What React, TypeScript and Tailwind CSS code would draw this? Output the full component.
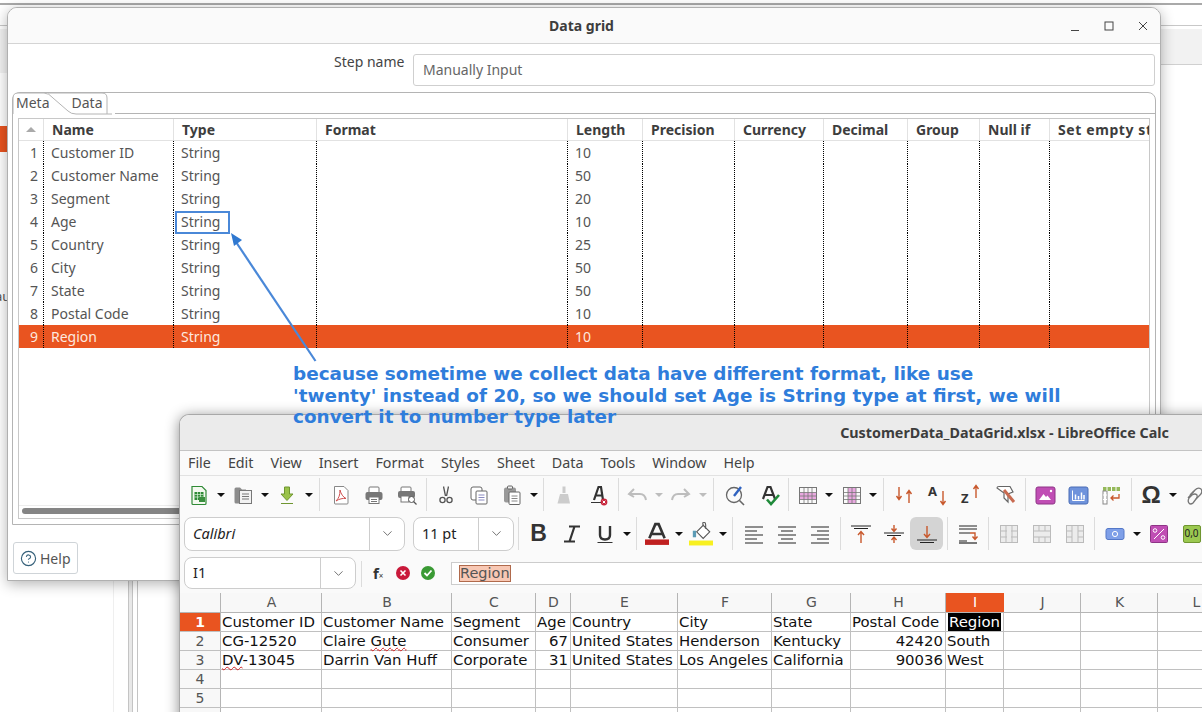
import type { ReactNode } from "react";
import { CircleHelp, ChevronDown } from "lucide-react";

const gridCols = [
  { title: "Name", w: 130 },
  { title: "Type", w: 143 },
  { title: "Format", w: 251 },
  { title: "Length", w: 75 },
  { title: "Precision", w: 92 },
  { title: "Currency", w: 89 },
  { title: "Decimal", w: 84 },
  { title: "Group", w: 72 },
  { title: "Null if", w: 70 },
  { title: "Set empty string?", w: 100 },
];

const gridRows = [
  ["Customer ID", "String", "10"],
  ["Customer Name", "String", "50"],
  ["Segment", "String", "20"],
  ["Age", "String", "10"],
  ["Country", "String", "25"],
  ["City", "String", "50"],
  ["State", "String", "50"],
  ["Postal Code", "String", "10"],
  ["Region", "String", "10"],
];

const sheetCols = [
  { l: "A", w: 101 },
  { l: "B", w: 130 },
  { l: "C", w: 84 },
  { l: "D", w: 35 },
  { l: "E", w: 107 },
  { l: "F", w: 94 },
  { l: "G", w: 79 },
  { l: "H", w: 95 },
  { l: "I", w: 58 },
  { l: "J", w: 77 },
  { l: "K", w: 77 },
  { l: "L", w: 77 },
];

const sheetRows: ReactNode[][] = [
  ["Customer ID", "Customer Name", "Segment", "Age", "Country", "City", "State", "Postal Code", "Region"],
  ["CG-12520", <>Claire <span className="underline decoration-wavy decoration-[#d02020] decoration-1">Gute</span></>, "Consumer", "67", "United States", "Henderson", "Kentucky", "42420", "South"],
  [<><span className="underline decoration-wavy decoration-[#d02020] decoration-1">DV</span>-13045</>, "Darrin Van Huff", "Corporate", "31", "United States", "Los Angeles", "California", "90036", "West"],
  [],
  [],
  [],
];

const Ico = ({ children, w = 22, h = 22 }: { children: ReactNode; w?: number; h?: number }) => (
  <svg width={w} height={h} viewBox="0 0 22 22" fill="none">
    {children}
  </svg>
);

const Btn = ({ children, active }: { children: ReactNode; active?: boolean }) => (
  <div className={`flex h-[33px] w-[33px] shrink-0 items-center justify-center rounded-[6px] ${active ? "bg-[#d4d4d4]" : ""}`}>
    {children}
  </div>
);

const Drop = () => (
  <div className="flex w-[11px] shrink-0 justify-center">
    <div className="h-0 w-0 border-x-[4px] border-t-[4px] border-x-transparent border-t-[#111]" />
  </div>
);

const Drop2 = () => (
  <div className="flex w-[11px] shrink-0 justify-center">
    <div className="h-0 w-0 border-x-[4px] border-t-[4px] border-x-transparent border-t-[#bdbdbd]" />
  </div>
);

const Sep = ({ w = 8 }: { w?: number }) => (
  <div className="flex h-[33px] shrink-0 justify-center" style={{ width: w }}>
    <div className="h-full w-px bg-[#dcdcdc]" />
  </div>
);

const Gap = () => <div className="w-[2px] shrink-0" />;

const SmallGrid = ({ fill }: { fill: ReactNode }) => (
  <Ico>
    {fill}
    <rect x="3.5" y="3.5" width="17" height="16" stroke="#777" />
    <path d="M3.5 8.5H20.5M3.5 12H20.5M3.5 15.5H20.5M8 3.5V19.5M12 3.5V19.5M16 3.5V19.5" stroke="#777" strokeWidth="0.8" />
  </Ico>
);

const Lines = ({ d }: { d: string }) => (
  <Ico>
    <path d={d} stroke="#222" strokeWidth="1.2" />
  </Ico>
);

const Arrow = ({ d }: { d: string }) => <path d={d} stroke="#c8582c" strokeWidth="1.4" fill="none" />;

const Toolbar1 = () => (
  <div className="flex h-[37px] shrink-0 items-center bg-[#fafafa] pl-[2.5px]">
    <Btn>
      <Ico>
        <path d="M4 2.5H14L18 6.5V19.5Q18 20.5 17 20.5H5Q4 20.5 4 19.5Z" fill="#f4f9f0" stroke="#2f8a36" strokeWidth="1.2" />
        <rect x="6.5" y="8" width="9" height="8" fill="#2f8a36" />
        <path d="M6.5 10.5H15.5M6.5 13H15.5M9.5 8V16M12.5 8V16" stroke="#d8f0d8" strokeWidth="0.7" />
        <rect x="11" y="13" width="6" height="5" fill="#3a8f3e" />
      </Ico>
    </Btn>
    <Drop />
    <Btn>
      <Ico>
        <path d="M2.5 5Q2.5 3.5 4 3.5H8L10 5.5H14V19.5H4Q2.5 19.5 2.5 18Z" fill="#8c8c8c" />
        <rect x="7.5" y="6.5" width="12" height="13" fill="#f2f2f2" stroke="#777" />
        <path d="M10 10H17M10 12.5H17M10 15H17" stroke="#777" />
      </Ico>
    </Btn>
    <Drop />
    <Btn>
      <Ico>
        <path d="M8.5 3H13.5V10H17L11 16.5L5 10H8.5Z" fill="#9ac34a" stroke="#6f9630" />
        <path d="M5 19.5H17" stroke="#6f9630" strokeWidth="1.2" />
      </Ico>
    </Btn>
    <Drop />
    <Sep w={10} />
    <Btn>
      <Ico>
        <path d="M4.5 2.5H14L18 6.5V19Q18 20 17 20H5Q4.5 20 4.5 19Z" fill="#fff" stroke="#888" />
        <path d="M10 6C10 11 9 14 6 17C9 15 13 14 16 14.5C13 13 11 10 10 6Z" stroke="#d05050" strokeWidth="1" fill="none" />
      </Ico>
    </Btn>
    <Btn>
      <Ico>
        <rect x="6" y="3" width="10" height="6" rx="1" stroke="#777" fill="#fff" />
        <rect x="2.5" y="8" width="17" height="8" rx="2" fill="#777" />
        <rect x="6" y="13" width="10" height="6.5" fill="#fff" stroke="#777" />
        <path d="M8 15.5H14M8 17.5H14" stroke="#777" />
      </Ico>
    </Btn>
    <Btn>
      <Ico>
        <rect x="5" y="3" width="10" height="5" rx="1" stroke="#777" fill="#fff" />
        <rect x="2" y="7" width="17" height="7" rx="2" fill="#777" />
        <rect x="5" y="12" width="8" height="6" fill="#fff" stroke="#777" />
        <circle cx="15.5" cy="15.5" r="3" fill="#fff" stroke="#555" />
        <path d="M17.5 17.5L20.5 20.5" stroke="#555" strokeWidth="1.2" />
      </Ico>
    </Btn>
    <Sep w={6} />
    <Btn>
      <Ico>
        <path d="M8.5 2.5L10.5 12M13.5 2.5L11.5 12" stroke="#555" strokeWidth="1.3" />
        <circle cx="7.5" cy="16" r="2.6" stroke="#555" strokeWidth="1.3" />
        <circle cx="14.5" cy="16" r="2.6" stroke="#555" strokeWidth="1.3" />
      </Ico>
    </Btn>
    <Btn>
      <Ico>
        <rect x="3" y="3" width="11" height="13" rx="2" fill="#fff" stroke="#666" />
        <rect x="8" y="7" width="11" height="13" rx="1" fill="#fff" stroke="#666" />
        <path d="M10.5 11H16.5M10.5 13.5H16.5M10.5 16H16.5" stroke="#8a8ac0" />
      </Ico>
    </Btn>
    <Btn>
      <Ico>
        <rect x="3" y="3.5" width="12" height="15" rx="2" fill="#999" />
        <rect x="6.5" y="2" width="5" height="3" rx="1" fill="#eee" stroke="#666" />
        <rect x="8" y="8" width="11" height="12.5" rx="1" fill="#fff" stroke="#666" />
        <path d="M10.5 12H16.5M10.5 14.5H16.5M10.5 17H16.5" stroke="#888" />
      </Ico>
    </Btn>
    <Drop />
    <Sep w={8} />
    <Btn>
      <Ico>
        <path d="M9.5 2.5H12.5V9H9.5Z" fill="#ccc" />
        <path d="M7 10H15L17 19.5H4.5Z" fill="#ccc" />
      </Ico>
    </Btn>
    <Gap />
    <Btn>
      <Ico>
        <path d="M6 16L10.5 3H13L15 16M7.5 11.5H14" stroke="#333" strokeWidth="2.2" />
        <path d="M3 18.5H13" stroke="#333" strokeWidth="1" />
        <circle cx="16" cy="18" r="3.4" fill="#c8263c" />
        <path d="M14.7 16.7L17.3 19.3M17.3 16.7L14.7 19.3" stroke="#fff" />
      </Ico>
    </Btn>
    <Sep w={5} />
    <Btn>
      <Ico>
        <path d="M8 5L3 10L8 13M3.5 10H14Q19 10 20 16" stroke="#bdbdbd" strokeWidth="2" />
      </Ico>
    </Btn>
    <Drop2 />
    <Btn>
      <Ico>
        <path d="M14 5L19 10L14 13M18.5 10H8Q3 10 2 16" stroke="#bdbdbd" strokeWidth="2" />
      </Ico>
    </Btn>
    <Drop2 />
    <Sep w={10} />
    <Btn>
      <Ico>
        <circle cx="10" cy="11" r="7.5" stroke="#666" strokeWidth="1.3" />
        <path d="M15.5 16.5L20 21" stroke="#666" strokeWidth="1.6" />
        <path d="M10 12L17 3" stroke="#2f62c0" strokeWidth="2.4" />
      </Ico>
    </Btn>
    <Gap />
    <Btn>
      <Ico>
        <path d="M4 15L8.5 3H11.5L16 15M6 11H14" stroke="#333" strokeWidth="2.2" />
        <path d="M8 15.5L12 20L20 11" stroke="#1f8a3a" strokeWidth="2.6" />
      </Ico>
    </Btn>
    <Sep w={4} />
    <Btn>
      <SmallGrid fill={<rect x="3.5" y="8.5" width="17" height="7" fill="#e9a8e0" />} />
    </Btn>
    <Drop />
    <Btn>
      <SmallGrid fill={<rect x="8" y="3.5" width="8" height="16" fill="#e9a8e0" />} />
    </Btn>
    <Drop />
    <Sep w={10} />
    <Btn>
      <Ico>
        <Arrow d="M5 3V15M2.5 12L5 15.5L7.5 12" />
        <Arrow d="M15 19V7M12.5 10L15 6.5L17.5 10" />
      </Ico>
    </Btn>
    <Btn>
      <Ico>
        <text x="1" y="12" fontFamily="'Noto Sans', sans-serif" fontSize="13" fontWeight="700" fill="#333">A</text>
        <Arrow d="M16 7V20M13.5 17L16 20.5L18.5 17" />
      </Ico>
    </Btn>
    <Btn>
      <Ico>
        <text x="1" y="19" fontFamily="'Noto Sans', sans-serif" fontSize="13" fontWeight="700" fill="#333">Z</text>
        <Arrow d="M16 14V2M13.5 5L16 1.5L18.5 5" />
      </Ico>
    </Btn>
    <Gap />
    <Btn>
      <Ico>
        <path d="M2 4Q2 2.5 4 2.5H15L18 8L13 10V18L9 14V9Z" fill="#fff" stroke="#666" strokeWidth="1.2" />
        <path d="M9 6L19 18" stroke="#c86a50" strokeWidth="3" />
      </Ico>
    </Btn>
    <Sep w={6} />
    <Btn>
      <Ico>
        <rect x="2" y="3" width="19" height="17" rx="2" fill="#c04eb4" stroke="#8e3486" />
        <path d="M5 16L9.5 10L12 13L13.5 11.5L17 16Z" fill="#fff" />
        <circle cx="17" cy="7" r="1.2" fill="#fff" />
      </Ico>
    </Btn>
    <Btn>
      <Ico>
        <rect x="2" y="3" width="19" height="17" rx="2" fill="#6f93dc" stroke="#4a6db5" />
        <path d="M5.5 6.5V16.5H17.5" stroke="#fff" />
        <path d="M8.5 15.5V10.5M11.5 15.5V12M14.5 15.5V8.5M17 15.5V11" stroke="#fff" strokeWidth="1.5" />
      </Ico>
    </Btn>
    <Btn>
      <Ico>
        <rect x="3" y="3" width="17" height="4" fill="#95b95a" />
        <rect x="3" y="7" width="4" height="13" fill="#fff" stroke="#888" />
        <path d="M3 11H7M3 15.5H7M7 3V7M11.5 3V7M16 3V7" stroke="#fff" />
        <path d="M19 10V14H11M13.5 11.5L11 14L13.5 16.5" stroke="#c8582c" strokeWidth="1.3" />
      </Ico>
    </Btn>
    <Sep w={7} />
    <Btn>
      <span className="font-['Liberation_Sans',sans-serif] text-[24px] leading-none font-bold text-[#333]">Ω</span>
    </Btn>
    <Drop />
    <Btn>
      <Ico>
        <path d="M4 14L11 6Q14 3 17 5Q19 8 16 11L12 15" stroke="#777" strokeWidth="1.3" />
        <path d="M10 7L6 11M6 20Q3 18 5 14L8 11Q11 9 13 11Q14 13 12 15L9 19Q8 20 6 20Z" stroke="#777" strokeWidth="1.3" />
      </Ico>
    </Btn>
  </div>
);

const ComboBox = ({ value, w, chevron, italic }: { value: string; w: string; chevron: string; italic?: boolean }) => (
  <div className={`flex shrink-0 items-center rounded-[8px] border border-[#cdcdcd] bg-white ${w}`}>
    <span className={`flex-1 pl-[8px] text-[14.5px] text-[#222] ${italic ? "italic" : ""}`}>{value}</span>
    <div className={`flex h-full items-center justify-center border-l border-[#cdcdcd] ${chevron}`}>
      <ChevronDown size={15} strokeWidth={1.2} color="#444" />
    </div>
  </div>
);

const Toolbar2 = () => (
  <div className="flex h-[41px] shrink-0 items-center bg-[#fafafa]">
    <div className="ml-[4px] flex h-[34px]">
      <ComboBox value="Calibri" w="w-[221px]" chevron="w-[35px]" italic />
    </div>
    <div className="ml-[8px] flex h-[34px]">
      <ComboBox value="11 pt" w="w-[101px]" chevron="w-[35px]" />
    </div>
    <Sep w={8} />
    <Btn>
      <span className="font-['Liberation_Sans',sans-serif] text-[23px] font-bold text-[#333]">B</span>
    </Btn>
    <Btn>
      <Ico>
        <path d="M8 3.5H19M3 18.5H14M13.5 3.5L8.5 18.5" stroke="#333" strokeWidth="2.2" />
      </Ico>
    </Btn>
    <Btn>
      <Ico>
        <path d="M6 3V12Q6 16.5 11 16.5Q16 16.5 16 12V3" stroke="#333" strokeWidth="2.4" />
        <path d="M3.5 19.5H18.5" stroke="#333" strokeWidth="1" />
      </Ico>
    </Btn>
    <Drop />
    <Sep w={8} />
    <Btn>
      <Ico w={24} h={24}>
        <path d="M4 15L9.5 2H12.5L18 15M6.5 11H15.5" stroke="#333" strokeWidth="2.4" />
        <rect x="0" y="16" width="22" height="5" fill="#c02020" />
      </Ico>
    </Btn>
    <Drop />
    <Btn>
      <Ico w={24} h={24}>
        <path d="M7 9L13 3L19 9L13 15Z" fill="#fff" stroke="#555" />
        <path d="M13 3Q12 0 14 0Q16 1 15 6" stroke="#555" />
        <path d="M5 8V14" stroke="#5b9bb5" strokeWidth="3" />
        <rect x="0" y="17" width="22" height="4.5" fill="#f8f020" />
      </Ico>
    </Btn>
    <Drop />
    <Sep w={9} />
    <Btn>
      <Lines d="M2 4H20M2 8H14M2 12H20M2 16H14M2 20H20" />
    </Btn>
    <Btn>
      <Lines d="M2 4H20M5 8H17M2 12H20M5 16H17M2 20H20" />
    </Btn>
    <Btn>
      <Lines d="M2 4H20M8 8H20M2 12H20M8 16H20M2 20H20" />
    </Btn>
    <Sep w={8} />
    <Btn>
      <Ico>
        <path d="M1 3H21M4 5.5H18" stroke="#222" strokeWidth="1.1" />
        <Arrow d="M11 20V9M8 12L11 8.5L14 12" />
      </Ico>
    </Btn>
    <Btn>
      <Ico>
        <path d="M1 10H21M4 12.5H18" stroke="#222" strokeWidth="1.1" />
        <Arrow d="M11 2V8M8.5 5.5L11 8.5L13.5 5.5M11 20V14.5M8.5 17L11 14L13.5 17" />
      </Ico>
    </Btn>
    <Btn active>
      <Ico>
        <path d="M1 17H21M4 19.5H18" stroke="#222" strokeWidth="1.1" />
        <Arrow d="M11 3V14M8 11L11 14.5L14 11" />
      </Ico>
    </Btn>
    <Sep w={8} />
    <Btn>
      <Ico>
        <path d="M2 3H20M2 6H20M2 10H13M2 18H10" stroke="#222" strokeWidth="1.2" />
        <path d="M2 20H20" stroke="#222" strokeWidth="1.2" />
        <Arrow d="M13 10H18V16M15.5 13.5L18 16.5L20.5 13.5" />
      </Ico>
    </Btn>
    <Sep w={8} />
    {[
      "M3 8H9M13 8H19M3 14H9M13 14H19M8 2.5V19.5M14 2.5V19.5",
      "M3 8H19M3 14H19M8 2.5V8M14 2.5V8M8 14V19.5M14 14V19.5",
      "M3 8H8V14H3M19 8H14V14H19M8 2.5V8M14 2.5V8M8 14V19.5M14 14V19.5",
    ].map((d) => (
      <Btn key={d}>
        <Ico>
          <rect x="2.5" y="2.5" width="17" height="17" fill="#ececec" stroke="#bbb" />
          <path d={d} stroke="#bbb" />
        </Ico>
      </Btn>
    ))}
    <Sep w={7} />
    <Btn>
      <Ico>
        <rect x="2" y="5.5" width="18" height="11" rx="2" fill="#7e9fe8" stroke="#5478c8" />
        <circle cx="11" cy="11" r="2.6" stroke="#fff" />
      </Ico>
    </Btn>
    <Drop />
    <Btn>
      <Ico>
        <rect x="2.5" y="2.5" width="17" height="17" rx="1" fill="#c04eb4" stroke="#8e3486" />
        <path d="M6 16L16 6" stroke="#fff" />
        <circle cx="7" cy="7.5" r="1.8" stroke="#fff" />
        <circle cx="15" cy="14.5" r="1.8" stroke="#fff" />
      </Ico>
    </Btn>
    <Btn>
      <div className="flex h-[18px] w-[18px] items-center justify-center rounded-[2px] border border-[#6f9630] bg-[#9bc850] text-[10px] text-[#222]">
        0,0
      </div>
    </Btn>
  </div>
);

const FormulaBar = () => (
  <div className="flex h-[39px] shrink-0 bg-[#fafafa]">
    <div className="mt-[3px] ml-[4px] flex h-[32px]">
      <ComboBox value="I1" w="w-[172px]" chevron="w-[35px]" />
    </div>
    <div className="ml-[5px] h-[26px] w-px self-center bg-[#dcdcdc]" />
    <div className="flex items-center pb-[1px]">
      <span className="ml-[11px] w-[17px] text-[15px] font-bold text-[#333]">
        f<span className="text-[8px] font-normal">×</span>
      </span>
      <svg className="ml-[5px]" width="16" height="16" viewBox="0 0 16 16">
        <circle cx="8" cy="8" r="7" fill="#c9193a" />
        <path d="M5.5 5.5L10.5 10.5M10.5 5.5L5.5 10.5" stroke="#fff" strokeWidth="1.6" />
      </svg>
      <svg className="ml-[9px]" width="16" height="16" viewBox="0 0 16 16">
        <circle cx="8" cy="8" r="7" fill="#3a9a34" />
        <path d="M4.5 8L7 10.5L11.5 5.5" stroke="#fff" strokeWidth="1.8" fill="none" />
      </svg>
    </div>
    <div className="mt-[8px] ml-[15px] flex h-[23px] flex-1 items-center border-y border-l border-[#cccccc] bg-white pl-[7px]">
      <span className="border border-[#b06a4c] bg-[#f8c8b4] font-['DejaVu_Sans',sans-serif] text-[14.5px] leading-[15px] text-[#555]">
        Region
      </span>
    </div>
  </div>
);

const Sheet = () => (
  <div className="flex-1 bg-white font-['DejaVu_Sans',sans-serif] text-[14.9px] leading-[19px] text-[#111]">
    <div className="flex h-[20px] border-b border-[#b5b5b5] bg-[#f8f8f8]">
      <div className="w-[41px] shrink-0 border-r border-[#b5b5b5]" />
      {sheetCols.map((c) => (
        <div
          key={c.l}
          className={`shrink-0 border-r pl-[1px] text-center text-[14px] ${c.l === "I" ? "border-[#e95420] bg-[#e95420] text-white" : "border-[#b5b5b5] text-[#555]"}`}
          style={{ width: c.w }}
        >
          {c.l}
        </div>
      ))}
    </div>
    {sheetRows.map((row, r) => (
      <div key={r} className="flex h-[19px] border-b border-[#c0c0c0]">
        <div className={`w-[41px] shrink-0 border-r border-[#b5b5b5] text-center text-[14px] ${r === 0 ? "bg-[#e95420] font-bold text-white" : "bg-[#f8f8f8] text-[#555]"}`}>
          {r + 1}
        </div>
        {sheetCols.map((c, i) => {
          const value = row[i];
          const numeric = r > 0 && (i === 3 || i === 7);
          return (
            <div
              key={c.l}
              className={`shrink-0 border-r border-[#c0c0c0] pr-[2px] pl-[1px] whitespace-nowrap ${numeric ? "text-right" : ""}`}
              style={{ width: c.w }}
            >
              {r === 0 && i === 8 ? <span className="ml-[1px] bg-black px-[1px] text-white">{value}</span> : value}
            </div>
          );
        })}
      </div>
    ))}
  </div>
);

const CalcWindow = () => (
  <div className="absolute top-[414px] left-[179px] flex h-[330px] w-[1650px] flex-col overflow-hidden rounded-t-[10px] border-t border-l border-[#a8a8a8] bg-[#fafafa] font-['Noto_Sans',sans-serif] shadow-[0_2px_14px_rgba(0,0,0,0.45)]">
    <div className="flex h-[36px] shrink-0 items-center justify-center border-b border-[#c4c4c4] bg-[#ebebeb] text-[14.3px] font-bold text-[#3d3d3d]">
      CustomerData_DataGrid.xlsx - LibreOffice Calc
    </div>
    <div className="flex h-[25px] shrink-0 items-center gap-[17px] border-b border-[#e2e2e2] pl-[8px] text-[14.3px] text-[#444]">
      {["File", "Edit", "View", "Insert", "Format", "Styles", "Sheet", "Data", "Tools", "Window", "Help"].map((m) => (
        <span key={m}>{m}</span>
      ))}
    </div>
    <Toolbar1 />
    <Toolbar2 />
    <FormulaBar />
    <Sheet />
  </div>
);

const DataGridWindow = () => (
  <div className="absolute top-[7px] left-[7px] flex h-[574px] w-[1154px] flex-col overflow-hidden rounded-t-[10px] border border-[#b0b0b0] bg-white font-['Noto_Sans',sans-serif] text-[14px] text-[#555] shadow-[0_3px_14px_rgba(0,0,0,0.3)]">
    <div className="relative flex h-[36px] shrink-0 items-center justify-center border-b border-[#d4d4d4] bg-[#fafafa] pr-[5px] text-[14px] font-bold text-[#3d3d3d]">
      Data grid
      <div className="absolute top-0 right-0 flex h-full items-center text-[#444]">
        <svg className="mr-[24px]" width="10" height="10" viewBox="0 0 10 10">
          <path d="M1 9.5H9" stroke="#444" />
        </svg>
        <svg className="mr-[24px]" width="10" height="10" viewBox="0 0 10 10">
          <rect x="1" y="1" width="8" height="8" fill="none" stroke="#444" />
        </svg>
        <svg className="mr-[12px]" width="10" height="10" viewBox="0 0 10 10">
          <path d="M1 1L9 9M9 1L1 9" stroke="#444" />
        </svg>
      </div>
    </div>
    <div className="flex h-[48px] shrink-0">
      <span className="mt-[7px] ml-[326px] w-[79px] text-[#444]">Step name</span>
      <div className="mt-[10px] mr-[5px] flex h-[32px] flex-1 items-center rounded-[3px] border border-[#cfcfcf] pb-[1px] pl-[9px] text-[#666]">
        Manually Input
      </div>
    </div>
    <div className="mx-[4px] flex h-[433px] shrink-0 flex-col rounded-t-[8px] border border-[#b4b4b4]">
      <div className="relative flex h-[21px] shrink-0">
        <svg className="absolute top-[-1px] left-[-1px]" width="100" height="23" viewBox="0 0 100 23" fill="none">
          <path d="M36 1H90Q95 1 95 6V22" stroke="#b4b4b4" />
          <path d="M1 23V6Q1 1 6 1H32Q37 1 41 6L56 19Q59 22 64 22H100V23H1Z" fill="#fff" />
          <path d="M1 22V6Q1 1 6 1H32Q37 1 41 6L56 19Q59 22 64 22H100" stroke="#b4b4b4" />
        </svg>
        <span className="relative ml-[3px] leading-[20px] text-[#555]">Meta</span>
        <span className="relative ml-[22px] leading-[20px] text-[#555]">Data</span>
        <div className="ml-auto h-[21px] w-[1040px] border-b border-[#b4b4b4]" />
      </div>
      <div className="mx-[5px] mt-[4px] flex h-[401px] flex-col overflow-hidden border border-[#c8c8c8]">
        <div className="flex h-[22px] shrink-0 border-b border-[#e2e2e2] font-bold text-[#3d3d3d]">
          <div className="flex w-[25px] shrink-0 items-center justify-center border-r border-[#e2e2e2]">
            <div className="h-0 w-0 border-x-[5px] border-b-[5px] border-x-transparent border-b-[#aaa]" />
          </div>
          {gridCols.map((c, i) => (
            <div
              key={c.title}
              className={`shrink-0 overflow-hidden border-r border-[#e2e2e2] pl-[8px] whitespace-nowrap ${i === 9 ? "tracking-[0.6px]" : ""}`}
              style={{ width: c.w }}
            >
              {c.title}
            </div>
          ))}
        </div>
        {gridRows.map((row, r) => (
          <div key={row[0]} className={`flex h-[23px] shrink-0 leading-[23px] ${r === 8 ? "bg-[#e95420] text-[#fde8df]" : ""}`}>
            <div className="w-[25px] shrink-0 border-r border-dotted border-black pr-[5px] text-right">{r + 1}</div>
            {gridCols.map((c, i) => (
              <div key={c.title} className="shrink-0 overflow-hidden border-r border-dotted border-black pl-[7px] whitespace-nowrap" style={{ width: c.w }}>
                {i === 0 ? row[0] : i === 1 ? row[1] : i === 3 ? row[2] : ""}
              </div>
            ))}
          </div>
        ))}
        <div className="mt-auto h-[13px] shrink-0 border-t border-[#ededed] pt-[2px] pl-[3px]">
          <div className="h-[6px] w-[1000px] rounded-full bg-[#858585]" />
        </div>
      </div>
    </div>
    <div className="mt-[17px] ml-[5px] flex h-[32px] w-[65px] items-center gap-[3px] rounded-[3px] border border-[#cfd4d8] pl-[6px] text-[#555]">
      <CircleHelp size={17} strokeWidth={1.6} color="#35607a" />
      Help
    </div>
  </div>
);

const Annotation = () => (
  <>
    <div className="absolute top-[211px] left-[175px] h-[23px] w-[55px] border-2 border-[#4a88d8]" />
    <svg className="absolute top-[225px] left-[225px]" width="100" height="140" viewBox="225 225 100 140" fill="none">
      <path d="M315.5 361L234 239" stroke="#4a88d8" strokeWidth="2.2" />
      <path d="M231 233L242 240L234 246Z" fill="#2f78d0" />
    </svg>
    <div className="absolute top-[363px] left-[293px] w-[800px] font-['DejaVu_Sans',sans-serif] text-[18.4px] leading-[21.5px] font-bold text-[#2f7ddb]">
      because sometime we collect data have different format, like use
      <br />
      'twenty' instead of 20, so we should set Age is String type at first, we will
      <br />
      convert it to number type later
    </div>
  </>
);

export default function App() {
  return (
    <div className="relative h-[712px] w-[1202px] overflow-hidden bg-white">
      {/* stuff showing behind the dialogs */}
      <div className="absolute top-[3px] left-0 h-[2px] w-full bg-[#a9a9a9]" />
      <div className="absolute top-[25px] left-0 h-[39px] w-full border-t border-[#c8c8c8] bg-[#f2f2f2] [background-clip:content-box] pt-[3px]" />
      <div className="absolute top-[64px] left-0 h-px w-full bg-[#d0d0d0]" />
      <div className="absolute top-[64px] left-0 h-[9px] w-[8px] bg-[#f2f2f2]" />
      <div className="absolute top-[126px] left-0 h-[26px] w-[8px] bg-[#e95420]" />
      <div className="absolute top-[287px] left-[-5px] font-['Noto_Sans',sans-serif] text-[13px] text-[#555]">au</div>
      <div className="absolute top-[560px] left-[113px] h-[152px] w-px bg-[#efefef]" />
      <div className="absolute top-[560px] left-[128px] h-[152px] w-[5px] border-x border-[#c4c4c4] bg-[#e8e8e8]" />
      <div className="absolute top-[560px] left-[137px] h-[152px] w-px bg-[#c4c4c4]" />
      <DataGridWindow />
      <CalcWindow />
      <Annotation />
    </div>
  );
}
